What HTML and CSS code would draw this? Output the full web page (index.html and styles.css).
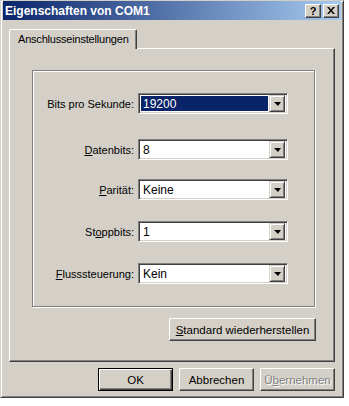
FILE: index.html
```html
<!DOCTYPE html>
<html lang="de">
<head>
  <meta charset="UTF-8">
  <title>Eigenschaften von COM1</title>
  <link rel="stylesheet" href="styles.css">
</head>
<body>

  <div class="dialog">
    <div class="titlebar">
      <span class="title">Eigenschaften von COM1</span>
      <div class="caption-btns">
        <div class="cap-btn help">?</div>
        <div class="cap-btn close">
          <svg width="8" height="7" viewBox="0 0 8 7">
            <path d="M0 0h2l2 2.5 2-2.5h2l-3 3.5 3 3.5h-2l-2-2.5-2 2.5h-2l3-3.5z" fill="#000"/>
          </svg>
        </div>
      </div>
    </div>

    <div class="tabs">
      <div class="tab">Anschlusseinstellungen</div>
    </div>

    <div class="panel">
      <div class="group">
        <div class="row r1">
          <label>Bits pro Sekunde:</label>
          <div class="combo selected">
            <span class="value">19200</span>
            <div class="drop"><i></i></div>
          </div>
        </div>
        <div class="row r2">
          <label><u>D</u>atenbits:</label>
          <div class="combo">
            <span class="value">8</span>
            <div class="drop"><i></i></div>
          </div>
        </div>
        <div class="row r3">
          <label><u>P</u>arität:</label>
          <div class="combo">
            <span class="value">Keine</span>
            <div class="drop"><i></i></div>
          </div>
        </div>
        <div class="row r4">
          <label>St<u>o</u>ppbits:</label>
          <div class="combo">
            <span class="value">1</span>
            <div class="drop"><i></i></div>
          </div>
        </div>
        <div class="row r5">
          <label><u>F</u>lusssteuerung:</label>
          <div class="combo">
            <span class="value">Kein</span>
            <div class="drop"><i></i></div>
          </div>
        </div>
      </div>
      <div class="panel-actions">
        <button class="btn wide"><u>S</u>tandard wiederherstellen</button>
      </div>
    </div>

    <div class="actions">
      <button class="btn default">OK</button>
      <button class="btn">Abbrechen</button>
      <button class="btn disabled">Ü<u>b</u>ernehmen</button>
    </div>
  </div>

</body>
</html>
```

FILE: styles.css
```css
body { margin: 0; background: #fff; font-family: "Liberation Sans", Arial, sans-serif; font-size: 11px; color: #000; }

.dialog { width: 344px; height: 398px; box-sizing: border-box; background: #d4d0c8; border: 1px solid; border-color: #d4d0c8 #404040 #404040 #d4d0c8; box-shadow: inset 1px 1px #fff, inset -1px -1px #808080; padding: 0 2px; }

.titlebar { height: 19px; display: flex; align-items: center; justify-content: space-between; background: linear-gradient(to right, #0a246a, #a6caf0); padding: 0 2px 0 2px; }
.title { color: #fff; font-weight: bold; font-size: 12px; }
.caption-btns { display: flex; gap: 2px; }
.cap-btn { width: 16px; height: 14px; box-sizing: border-box; background: #d4d0c8; border: 1px solid; border-color: #fff #404040 #404040 #fff; box-shadow: inset -1px -1px #808080; display: flex; align-items: center; justify-content: center; }
.cap-btn.help { font-weight: bold; font-size: 11px; line-height: 12px; }

.tabs { display: flex; padding: 9px 0 0 6px; height: 19px; }
.tab { height: 20px; box-sizing: border-box; padding: 3px 7px 0 8px; background: #d4d0c8; border: 1px solid; border-bottom: none; border-color: #fff #404040 #404040 #fff; box-shadow: inset -1px 0 #808080; border-radius: 2px 2px 0 0; position: relative; z-index: 1; letter-spacing: -0.2px; }

.panel { margin: 0 6px; height: 314px; box-sizing: border-box; border: 1px solid; border-color: #fff #404040 #404040 #fff; box-shadow: inset -1px -1px #808080; padding: 21px 19px 0 22px; }

.group { height: 237px; box-sizing: border-box; border: 1px solid #808080; box-shadow: 1px 1px #fff, inset 1px 1px #fff; padding-top: 22px; }

.row { display: flex; align-items: center; height: 21px; }
.row label { width: 101px; text-align: right; padding-right: 4px; }
.row.r2 { margin-top: 25px; }
.row.r3 { margin-top: 19px; }
.row.r4 { margin-top: 21px; }
.row.r5 { margin-top: 21px; }

.combo { width: 150px; height: 21px; box-sizing: border-box; background: #fff; border: 1px solid; border-color: #808080 #fff #fff #808080; box-shadow: inset 1px 1px #404040, inset -1px -1px #d4d0c8; display: flex; align-items: center; padding: 2px; }
.combo .value { flex: 1; align-self: stretch; display: flex; align-items: center; padding-left: 2px; font-size: 12px; }
.combo.selected .value { background: #0a246a; color: #fff; margin-right: 1px; }
.drop { width: 16px; height: 17px; box-sizing: border-box; background: #d4d0c8; border: 1px solid; border-color: #d4d0c8 #404040 #404040 #d4d0c8; box-shadow: inset 1px 1px #fff, inset -1px -1px #808080; display: flex; align-items: center; justify-content: center; }
.drop i { width: 0; height: 0; border-left: 4px solid transparent; border-right: 3px solid transparent; border-top: 4px solid #000; margin-top: 1px; }

.panel-actions { display: flex; justify-content: flex-end; margin-top: 11px; margin-right: -1px; }

.btn { font-family: inherit; font-size: 11.5px; height: 23px; width: 75px; box-sizing: border-box; background: #d4d0c8; border: 1px solid; border-color: #fff #404040 #404040 #fff; box-shadow: inset -1px -1px #808080; padding: 0; color: #000; }
.btn.wide { width: 147px; }
.btn.default { border: 1px solid #000; box-shadow: inset 1px 1px #fff, inset -1px -1px #404040, inset -2px -2px #808080; }
.btn.disabled { color: #808080; text-shadow: 1px 1px #fff; }

.actions { display: flex; justify-content: flex-end; gap: 6px; padding: 6px 6px 0 0; }
```
